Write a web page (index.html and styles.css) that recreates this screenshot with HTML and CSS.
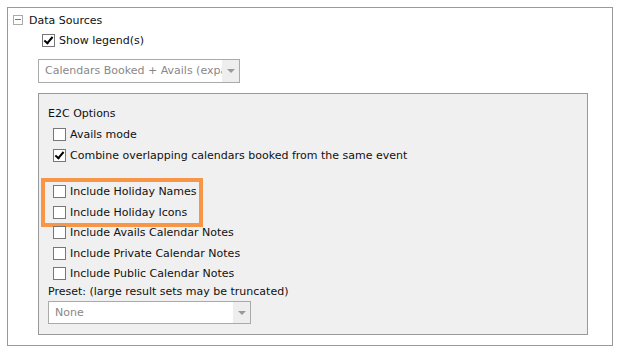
FILE: index.html
```html
<!DOCTYPE html>
<html lang="en">
<head>
    <meta charset="UTF-8">
    <title>Data Sources</title>
    <link rel="stylesheet" href="styles.css">
</head>
<body>
    <div class="panel">
        <div class="panel-head">
            <span class="toggle"></span>
            <span>Data Sources</span>
        </div>

        <div class="panel-body">
            <label class="check top-check">
                <span class="box checked"></span>
                <span>Show legend(s)</span>
            </label>

            <div class="select wide">
                <span class="select-text">Calendars Booked + Avails (expanded)</span>
                <span class="select-arrow"></span>
            </div>

            <!-- E2C options -->
            <div class="options">
                <div class="options-title">E2C Options</div>
                <label class="check"><span class="box"></span><span>Avails mode</span></label>
                <label class="check"><span class="box checked"></span><span>Combine overlapping calendars booked from the same event</span></label>
                <div class="spacer"></div>

                <div class="highlight">
                    <label class="check"><span class="box"></span><span>Include Holiday Names</span></label>
                    <label class="check"><span class="box"></span><span>Include Holiday Icons</span></label>
                </div>

                <label class="check"><span class="box"></span><span>Include Avails Calendar Notes</span></label>
                <label class="check"><span class="box"></span><span>Include Private Calendar Notes</span></label>
                <label class="check"><span class="box"></span><span>Include Public Calendar Notes</span></label>

                <div class="preset-label">Preset: (large result sets may be truncated)</div>
                <div class="select narrow">
                    <span class="select-text">None</span>
                    <span class="select-arrow"></span>
                </div>
            </div>
        </div>
    </div>
</body>
</html>
```

FILE: styles.css
```css
/* General styling */
body {
    margin: 0;
    background-color: white;
    font-family: "DejaVu Sans", sans-serif;
    font-size: 11px;
    color: #111;
}

/* Outer panel */
.panel {
    box-sizing: border-box;
    width: 606px;
    height: 339px;
    margin: 7px;
    border: 1px solid #999;
    padding: 5px 0 0 5px;
}

.panel-head {
    display: flex;
    align-items: center;
    gap: 6px;
    height: 14px;
}

.toggle {
    position: relative;
    box-sizing: border-box;
    width: 10px;
    height: 10px;
    border: 1px solid #aaa;
}

.toggle::after {
    content: "";
    position: absolute;
    left: 1px;
    top: 3px;
    width: 6px;
    height: 1px;
    background-color: #777;
}

.panel-body {
    display: flex;
    flex-direction: column;
    align-items: flex-start;
    padding-left: 25px;
}

/* Checkbox rows */
.check {
    display: flex;
    align-items: center;
    gap: 4px;
    height: 20.5px;
}

.top-check {
    margin: 3px 0 0 4px;
}

.box {
    position: relative;
    box-sizing: border-box;
    width: 13px;
    height: 13px;
    border: 1px solid #777;
    background-color: white;
}

.box.checked::after {
    content: "";
    position: absolute;
    left: 3px;
    top: 0px;
    width: 3px;
    height: 7px;
    border: solid #000;
    border-width: 0 2px 2px 0;
    transform: rotate(40deg);
}

/* Select boxes */
.select {
    box-sizing: border-box;
    display: flex;
    align-items: center;
    height: 24px;
    border: 1px solid #aaa;
    background-color: white;
    color: #888;
}

.select.wide {
    width: 202px;
    margin-top: 8px;
}

.select.narrow {
    width: 203px;
    height: 23px;
    margin-top: 1px;
}

.select-text {
    flex: 1;
    padding-left: 6px;
    overflow: hidden;
    white-space: nowrap;
}

.select-arrow {
    position: relative;
    width: 17px;
    height: 100%;
    background-color: #eee;
}

.select-arrow::after {
    content: "";
    position: absolute;
    left: 5px;
    top: 9px;
    border-left: 4px solid transparent;
    border-right: 4px solid transparent;
    border-top: 4px solid #999;
}

/* E2C options box */
.options {
    box-sizing: border-box;
    display: flex;
    flex-direction: column;
    align-items: flex-start;
    width: 550px;
    height: 242px;
    margin-top: 10px;
    border: 1px solid #999;
    background-color: #f0f0f0;
    padding: 13px 0 0 9px;
}

.options .check {
    margin-left: 5px;
}

.options-title {
    height: 18px;
}

.spacer {
    height: 16px;
}

.highlight {
    margin-left: -3px;
    padding: 0 2px 0 3px;
    outline: 4px solid #f79646;
}

.preset-label {
    height: 16px;
    line-height: 16px;
}
```
